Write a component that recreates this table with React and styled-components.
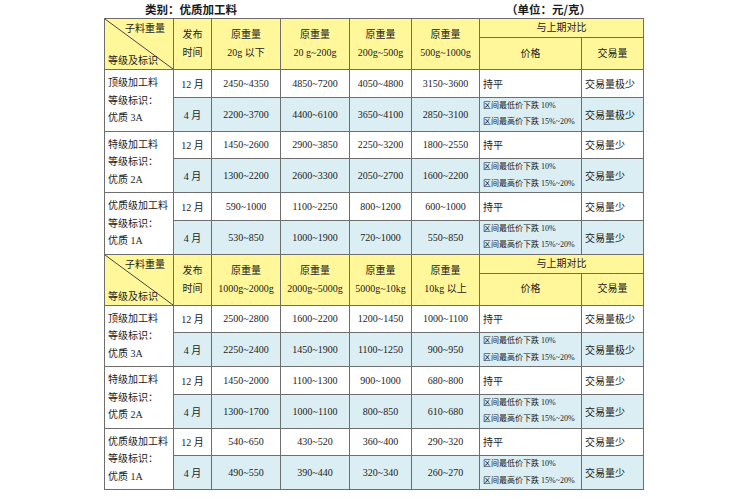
import React from "react";
import styled, { createGlobalStyle } from "styled-components";

const GlobalStyle = createGlobalStyle`
  html, body {
    margin: 0;
    padding: 0;
    background: #ffffff;
  }
  body {
    font-family: "Liberation Serif", "Noto Sans CJK SC", serif;
    color: #222;
  }
`;

const YELLOW = "#fff799";
const BLUE = "#daeef3";
const LINE = "#6e6e6e";

const Page = styled.div`
  width: 750px;
  height: 500px;
  padding-left: 104px;
  box-sizing: border-box;
`;

const TitleBar = styled.div`
  width: 539px;
  height: 18px;
  display: flex;
  justify-content: space-between;
  align-items: center;
  padding: 0 52px 0 41px;
  box-sizing: border-box;
  font-family: "Noto Sans CJK SC", sans-serif;
  font-size: 11.5px;
  font-weight: 700;
  color: #1a1a1a;
`;

const Table = styled.table`
  width: 539px;
  table-layout: fixed;
  border-collapse: collapse;
  font-size: 10px;
`;

const Row = styled.tr`
  height: ${({ $h }) => $h}px;
`;

const HeadCell = styled.td`
  background: ${YELLOW};
  border: 1px solid ${LINE};
  padding: 0 2px;
  text-align: center;
  vertical-align: middle;
  line-height: 18px;
  white-space: nowrap;
  font-size: 10px;
`;

const DiagCell = styled(HeadCell)`
  padding: 0;
  position: relative;
`;

const DiagBox = styled.div`
  position: relative;
  height: 50px;
  display: flex;
  flex-direction: column;
  justify-content: space-between;
  padding: 2px 8px 2px 3px;
  box-sizing: border-box;
  line-height: 14px;
  font-family: "Noto Sans CJK SC", sans-serif;
`;

const DiagTop = styled.span`
  align-self: flex-end;
`;

const DiagBottom = styled.span`
  align-self: flex-start;
`;

const DiagLine = styled.svg`
  position: absolute;
  left: 0;
  top: 0;
  width: 100%;
  height: 100%;
`;

const Cell = styled.td`
  background: ${({ $tone }) => ($tone === "blue" ? BLUE : "#ffffff")};
  border: 1px solid ${LINE};
  padding: 0 3px;
  text-align: ${({ $align }) => $align || "center"};
  vertical-align: middle;
  white-space: nowrap;
  font-size: 10px;
`;

const NameCell = styled(Cell)`
  text-align: left;
  line-height: 17.5px;
  background: #ffffff;
`;

const Small = styled.div`
  font-size: 8px;
  line-height: 16.5px;
`;

const drop = ["区间最低价下跌 10%", "区间最高价下跌 15%~20%"];

const sections = [
  {
    cols: ["20g 以下", "20 g~200g", "200g~500g", "500g~1000g"],
    groups: [
      {
        name: ["顶级加工料", "等级标识：", "优质 3A"],
        rows: [
          ["2450~4350", "4850~7200", "4050~4800", "3150~3600"],
          ["2200~3700", "4400~6100", "3650~4100", "2850~3100"],
        ],
        vol: "交易量极少",
      },
      {
        name: ["特级加工料", "等级标识：", "优质 2A"],
        rows: [
          ["1450~2600", "2900~3850", "2250~3200", "1800~2550"],
          ["1300~2200", "2600~3300", "2050~2700", "1600~2200"],
        ],
        vol: "交易量少",
      },
      {
        name: ["优质级加工料", "等级标识：", "优质 1A"],
        rows: [
          ["590~1000", "1100~2250", "800~1200", "600~1000"],
          ["530~850", "1000~1900", "720~1000", "550~850"],
        ],
        vol: "交易量少",
      },
    ],
  },
  {
    cols: ["1000g~2000g", "2000g~5000g", "5000g~10kg", "10kg 以上"],
    groups: [
      {
        name: ["顶级加工料", "等级标识：", "优质 3A"],
        rows: [
          ["2500~2800", "1600~2200", "1200~1450", "1000~1100"],
          ["2250~2400", "1450~1900", "1100~1250", "900~950"],
        ],
        vol: "交易量极少",
      },
      {
        name: ["特级加工料", "等级标识：", "优质 2A"],
        rows: [
          ["1450~2000", "1100~1300", "900~1000", "680~800"],
          ["1300~1700", "1000~1100", "800~850", "610~680"],
        ],
        vol: "交易量少",
      },
      {
        name: ["优质级加工料", "等级标识：", "优质 1A"],
        rows: [
          ["540~650", "430~520", "360~400", "290~320"],
          ["490~550", "390~440", "320~340", "260~270"],
        ],
        vol: "交易量少",
      },
    ],
  },
];

const widths = [69, 38, 69, 69, 62, 68, 102, 62];

const Header = ({ cols }) => (
  <>
    <Row $h={19}>
      <DiagCell rowSpan={2}>
        <DiagBox>
          <DiagLine viewBox="0 0 100 100" preserveAspectRatio="none">
            <line x1="0" y1="0" x2="100" y2="100" stroke="#444" strokeWidth="1" vectorEffect="non-scaling-stroke" />
          </DiagLine>
          <DiagTop>子料重量</DiagTop>
          <DiagBottom>等级及标识</DiagBottom>
        </DiagBox>
      </DiagCell>
      <HeadCell rowSpan={2}>
        发布
        <br />
        时间
      </HeadCell>
      {cols.map((c) => (
        <HeadCell key={c} rowSpan={2}>
          原重量
          <br />
          {c}
        </HeadCell>
      ))}
      <HeadCell colSpan={2}>与上期对比</HeadCell>
    </Row>
    <Row $h={32}>
      <HeadCell>价格</HeadCell>
      <HeadCell>交易量</HeadCell>
    </Row>
  </>
);

const Group = ({ group }) => (
  <>
    <Row $h={27.5}>
      <NameCell rowSpan={2}>
        {group.name.map((n) => (
          <div key={n}>{n}</div>
        ))}
      </NameCell>
      <Cell>12 月</Cell>
      {group.rows[0].map((v, i) => (
        <Cell key={i}>{v}</Cell>
      ))}
      <Cell $align="left">持平</Cell>
      <Cell $align="left">{group.vol}</Cell>
    </Row>
    <Row $h={34}>
      <Cell $tone="blue">4 月</Cell>
      {group.rows[1].map((v, i) => (
        <Cell key={i} $tone="blue">
          {v}
        </Cell>
      ))}
      <Cell $tone="blue" $align="left">
        {drop.map((d) => (
          <Small key={d}>{d}</Small>
        ))}
      </Cell>
      <Cell $tone="blue" $align="left">
        {group.vol}
      </Cell>
    </Row>
  </>
);

export default function App() {
  return (
    <Page>
      <GlobalStyle />
      <TitleBar>
        <span>类别：优质加工料</span>
        <span>（单位：元/克）</span>
      </TitleBar>
      <Table>
        <colgroup>
          {widths.map((w, i) => (
            <col key={i} style={{ width: w }} />
          ))}
        </colgroup>
        <tbody>
          {sections.map((s, si) => (
            <React.Fragment key={si}>
              <Header cols={s.cols} />
              {s.groups.map((g, gi) => (
                <Group key={gi} group={g} />
              ))}
            </React.Fragment>
          ))}
        </tbody>
      </Table>
    </Page>
  );
}
